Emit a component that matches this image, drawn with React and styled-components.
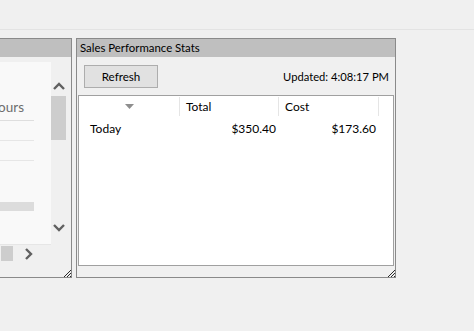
import styled, { createGlobalStyle } from "styled-components";

const GlobalStyle = createGlobalStyle`
  html, body {
    margin: 0;
    padding: 0;
    background: #f0f0f0;
    font-family: Lato, "Noto Sans", sans-serif;
    font-size: 11.2px;
    color: #000;
    overflow: hidden;
  }
`;

const TopBar = styled.div`
  height: 29px;
  border-bottom: 1px solid #e3e3e3;
`;

const Workspace = styled.div`
  display: flex;
  gap: 4px;
  padding-top: 8px;
`;

const Panel = styled.section`
  box-sizing: border-box;
  position: relative;
  width: ${(p) => p.$width}px;
  margin-left: ${(p) => p.$offset || 0}px;
  height: 240px;
  border: 1px solid #8a8a8a;
  display: flex;
  flex-direction: column;
  flex-shrink: 0;
`;

const TitleBar = styled.div`
  height: 18px;
  background: #bfbfbf;
  padding-left: 3px;
  display: flex;
  align-items: center;
  line-height: 18px;
  white-space: nowrap;
  font-size: 11.4px;
`;

const LeftBody = styled.div`
  flex: 1;
  display: flex;
  justify-content: flex-end;
  padding: 5px 3px 0 0;
`;

const ScrollViewer = styled.div`
  display: grid;
  grid-template-columns: 1fr 17px;
  grid-template-rows: 183px 17px;
  width: 220px;
  height: 200px;
`;

const ListArea = styled.div`
  background: #f9f9f9;
  border-bottom: 1px solid #e6e6e6;
  display: flex;
  flex-direction: column;
  align-items: flex-end;
  padding-right: 17px;
  overflow: hidden;
`;

const ListRow = styled.div`
  width: 200px;
  height: ${(p) => p.$h}px;
  box-sizing: border-box;
  border-bottom: 1px solid ${(p) => p.$line || "transparent"};
  background: ${(p) => p.$fill || "transparent"};
  display: flex;
  align-items: flex-end;
  justify-content: flex-end;
  padding: 0 10px 5px 0;
  color: #6d6d6d;
  font-size: 13.5px;
`;

const VScroll = styled.div`
  display: flex;
  flex-direction: column;
  align-items: flex-start;
  padding-top: 15px;
  background: #f0f0f0;
`;

const ScrollThumb = styled.div`
  background: #cdcdcd;
  width: ${(p) => p.$w}px;
  height: ${(p) => p.$h}px;
`;

const ArrowBox = styled.div`
  width: ${(p) => p.$w || 17}px;
  height: ${(p) => p.$h || 17}px;
  display: flex;
  align-items: center;
  justify-content: center;
`;

const HScroll = styled.div`
  display: flex;
  align-items: center;
  justify-content: flex-end;
  background: #f0f0f0;
`;

const Corner = styled.div`
  background: #f0f0f0;
`;

const Grip = styled.svg`
  position: absolute;
  right: 0;
  bottom: 0;
`;

const RightBody = styled.div`
  flex: 1;
  display: flex;
  flex-direction: column;
  padding: 8px 1px 11px 1px;
`;

const Toolbar = styled.div`
  display: flex;
  justify-content: space-between;
  align-items: center;
  padding: 0 5px 0 6px;
  margin-bottom: 7px;
`;

const Button = styled.button`
  box-sizing: border-box;
  width: 74px;
  height: 23px;
  background: #e1e1e1;
  border: 1px solid #adadad;
  font-family: inherit;
  font-size: 11.6px;
  color: #000;
  padding: 0;
`;

const Updated = styled.span`
  font-size: 11.2px;
`;

const Grid = styled.div`
  flex: 1;
  background: #fff;
  border: 1px solid #a0a0a0;
  display: flex;
  flex-direction: column;
  font-size: 12px;
`;

const Row = styled.div`
  display: grid;
  grid-template-columns: 101px 99px 100px 1fr;
  height: ${(p) => p.$h}px;
`;

const HeadCell = styled.div`
  border-right: 1px solid ${(p) => (p.$last ? "transparent" : "#e5e5e5")};
  margin: 1px 0 2px;
  display: flex;
  align-items: center;
  justify-content: ${(p) => (p.$center ? "center" : "flex-start")};
  padding-left: ${(p) => (p.$center ? 0 : 6)}px;
`;

const Cell = styled.div`
  display: flex;
  align-items: center;
  justify-content: ${(p) => (p.$right ? "flex-end" : "flex-start")};
  padding: ${(p) => (p.$right ? "0 3px 0 0" : "0 0 0 11px")};
`;

const Chevron = ({ dir }) => {
  const pts = {
    up: "1,7 6,2 11,7",
    down: "1,2 6,7 11,2",
    right: "2,1 7,6 2,11",
  }[dir];
  const w = dir === "right" ? 10 : 12;
  const h = dir === "right" ? 12 : 9;
  return (
    <svg width={w} height={h} viewBox={`0 0 ${w} ${h}`}>
      <polyline points={pts} fill="none" stroke="#606060" strokeWidth="2.4" />
    </svg>
  );
};

const GripIcon = () => (
  <Grip width="10" height="10" viewBox="0 0 10 10">
    {[3, 6, 9, 12].map((o) => (
      <line key={o} x1={o} y1="10" x2="10" y2={o} stroke="#2a2a2a" strokeWidth="1" />
    ))}
  </Grip>
);

export default function App() {
  return (
    <>
      <GlobalStyle />
      <TopBar />
      <Workspace>
        <Panel $width={260} $offset={-188}>
          <TitleBar />
          <LeftBody>
            <ScrollViewer>
              <ListArea>
                <ListRow $h={23} />
                <ListRow $h={36} $line="#dedede">Hours</ListRow>
                <ListRow $h={20} $line="#e6e6e6" />
                <ListRow $h={20} $line="#e6e6e6" />
                <ListRow $h={41} />
                <ListRow $h={9} $fill="#dcdcdc" />
              </ListArea>
              <VScroll>
                <ArrowBox $h={19} $w={16}>
                  <Chevron dir="up" />
                </ArrowBox>
                <ScrollThumb $w={15} $h={44} />
                <div style={{ flex: 1 }} />
                <ArrowBox $h={20} $w={16}>
                  <Chevron dir="down" />
                </ArrowBox>
                <div style={{ height: 8 }} />
              </VScroll>
              <HScroll>
                <ScrollThumb $w={12} $h={15} style={{ marginRight: 10 }} />
                <ArrowBox $w={12}>
                  <Chevron dir="right" />
                </ArrowBox>
                <div style={{ width: 16 }} />
              </HScroll>
              <Corner />
            </ScrollViewer>
          </LeftBody>
          <GripIcon />
        </Panel>
        <Panel $width={320}>
          <TitleBar>Sales Performance Stats</TitleBar>
          <RightBody>
            <Toolbar>
              <Button>Refresh</Button>
              <Updated>Updated: 4:08:17 PM</Updated>
            </Toolbar>
            <Grid>
              <Row $h={22}>
                <HeadCell $center>
                  <svg width="9" height="5" viewBox="0 0 9 5">
                    <polygon points="0,0 9,0 4.5,5" fill="#8e8e8e" />
                  </svg>
                </HeadCell>
                <HeadCell>Total</HeadCell>
                <HeadCell>Cost</HeadCell>
                <HeadCell $last />
              </Row>
              <Row $h={20}>
                <Cell>Today</Cell>
                <Cell $right>$350.40</Cell>
                <Cell $right>$173.60</Cell>
                <Cell />
              </Row>
            </Grid>
          </RightBody>
          <GripIcon />
        </Panel>
      </Workspace>
    </>
  );
}
